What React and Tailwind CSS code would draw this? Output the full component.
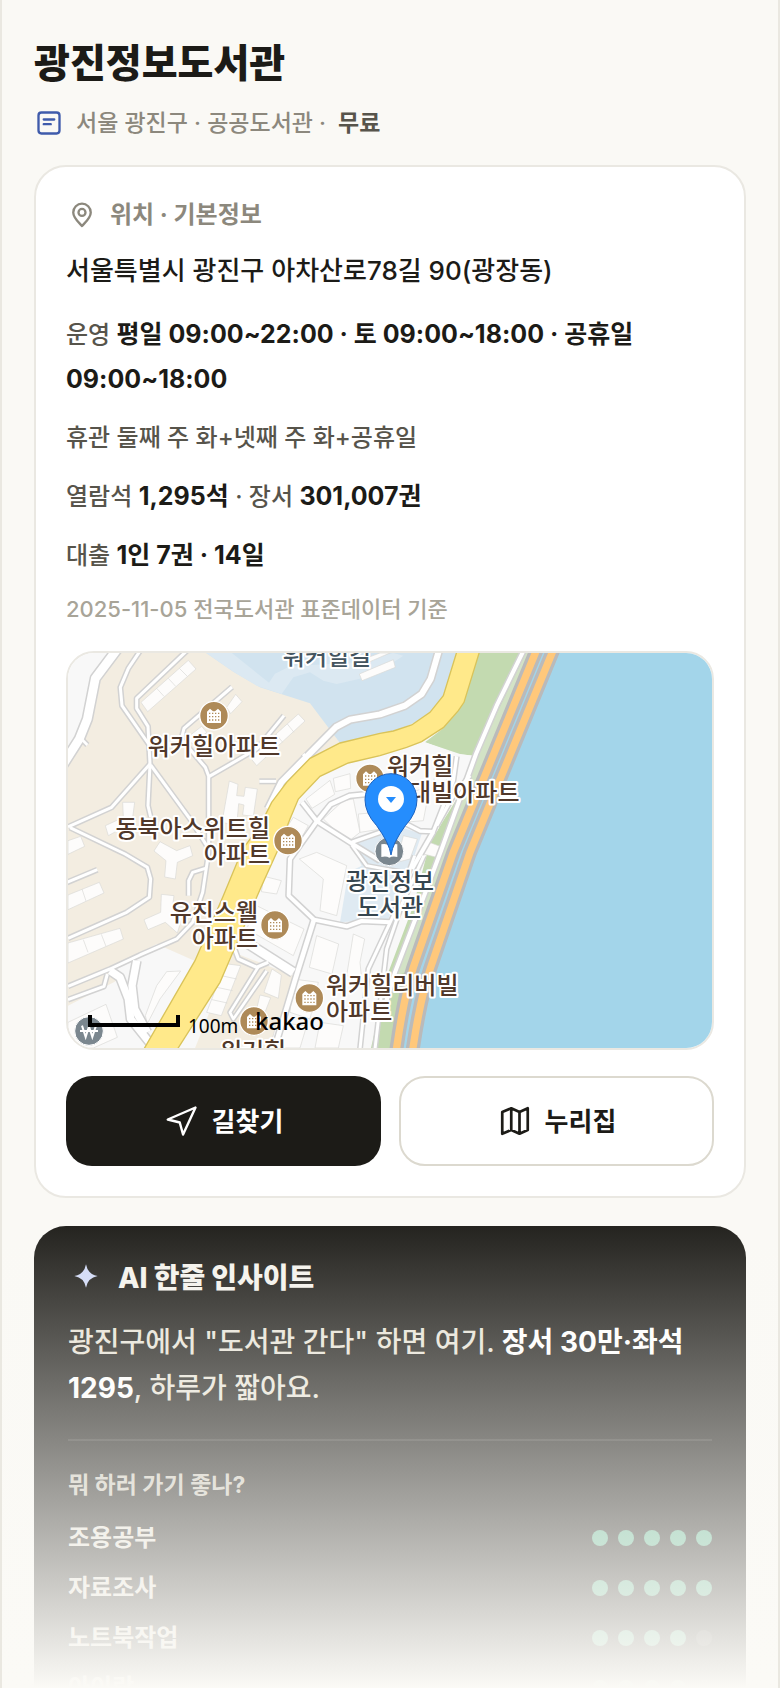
const FONT = "font-['Inter','Noto_Sans_CJK_KR',sans-serif]";

const details = [
    { key: 'hours', parts: [['운영 '], ['평일 09:00~22:00 · 토 09:00~18:00 · 공휴일 09:00~18:00', true]] },
    { key: 'closed', parts: [['휴관 둘째 주 화+넷째 주 화+공휴일']] },
    { key: 'seats', parts: [['열람석 '], ['1,295석', true], [' · 장서 '], ['301,007권', true]] },
    { key: 'loan', parts: [['대출 '], ['1인 7권 · 14일', true]] },
];

const purposes = [
    { name: '조용공부', score: 5 },
    { name: '자료조사', score: 5 },
    { name: '노트북작업', score: 4 },
    { name: '아이랑', score: 4 },
];

// Map geometry is in tile units, three to a pixel
const roads = [
    ['M172 30L106 118L82 240L58 300L4 385', 26],
    ['M60 295L82 318', 8],
    ['M240 36L205 88L181 145L186 200L268 318', 9],
    ['M382 34L230 178L230 208L264 262L270 375L264 500L272 534', 9],
    ['M270 375L155 505L24 564', 9],
    ['M272 378L390 540L440 620', 9],
    ['M516 144L372 268L364 300L436 385L446 412L446 640L428 760L398 850L350 900L240 948L150 990L24 1042', 9],
    ['M436 688L398 700L386 725L386 770', 9],
    ['M672 230L590 330L448 412', 9],
    ['M1138 30L1112 120L1085 165L1035 200L960 226L870 242L828 264L664 430L624 510', 18],
    ['M730 345L742 362', 10],
    ['M598 427H648', 9],
    ['M30 566L195 645L262 685L272 720L268 775L200 820L24 898', 9],
    ['M16 732L112 692', 9],
    ['M24 1082L132 1042L142 1005', 9],
    ['M150 995L180 1015L205 1080L212 1140L300 1250', 22],
    ['M230 965L216 1040L224 1110L262 1180', 22],
    ['M726 490L772 548L870 610L960 665', 12],
    ['M990 458L870 470L812 496L770 548L690 660L686 770L762 842L860 862L905 846L992 850', 12],
    ['M762 842L706 1020L640 1240', 14],
    ['M550 905L700 1000', 26],
    ['M520 920L535 960L590 985L625 970', 10],
    ['M594 985L510 1120L520 1140L620 995', 8],
    ['M960 560L1010 540L1080 576L1120 578L1180 425L1190 352', 10],
    ['M1120 578L1056 690', 12],
    ['M1230 410L1180 470L1130 560', 10],
    ['M875 610L960 580', 10],
    ['M875 618L920 680L1030 700', 8],
    ['M1092 650L1028 790L980 930L945 1230', 9],
    ['M1064 650L1000 830L925 990L900 1230', 9],
    ['M1390 36L1310 200L1248 345L1145 630L1070 830L1005 1000L975 1100', 12],
];

const buildings = [
    'M243 190L385 64L408 90L263 218Z',
    'M500 205L527 166L546 188L512 224Z',
    'M570 355L715 225L735 246L590 380Z',
    'M376 300L425 262L440 280L400 315Z',
    'M508 426L534 436L530 470L552 472L556 445L592 450L580 532L548 528L552 498L536 494L530 560L486 550Z',
    'M188 490H224L218 535L200 560L145 590L136 560L190 535Z',
    'M24 605L62 592L74 622L24 646Z',
    'M300 608L350 635L390 620L398 650L352 670L346 720L314 714L318 665L282 636Z',
    'M24 768L118 730L132 762L24 812Z',
    'M24 912L180 868L190 900L24 972Z',
    'M304 766L342 770L338 800L372 818L352 882L316 850L264 872L252 842L302 820Z',
    'M320 998L362 996L300 1080L262 1154L256 1130L290 1040Z',
    'M24 1150L138 1096L172 1195L100 1227L24 1227Z',
    'M496 974L542 980L484 1130L440 1120Z',
    'M738 480L810 424L824 466L756 508Z',
    'M820 418L870 404L872 448L826 458Z',
    'M790 540L850 485L880 480L900 580L862 610Z',
    'M895 525L960 520L965 570L900 580Z',
    'M645 620L700 535L745 560L700 640Z',
    'M612 712L664 725L650 765L604 758Z',
    'M718 660L770 640L860 680L830 830L780 815L790 720Z',
    'M590 800L732 870L700 950L560 870Z',
    'M770 890L836 915L816 1005L748 985Z',
    'M880 885L914 900L900 970L905 1020L860 1010Z',
    'M636 990L664 1008L655 1078L612 1060Z',
    'M600 1068L632 1076L615 1120L590 1110Z',
    'M700 1020L775 1030L750 1140L690 1120Z',
    'M650 1150L740 1160L720 1227H630Z',
    'M780 1150L850 1160L835 1227H765Z',
    'M898 105L1000 62L1006 85L906 125Z',
    'M930 68L990 42H960L925 55Z',
    'M1030 470L1110 440L1090 545L1030 550Z',
    'M1135 365L1175 380L1150 450L1120 430Z',
    'M1030 590L1072 600L1050 660L1010 670Z',
    'M1095 605L1140 622L1130 655L1090 645Z',
];

const apartments = [
    [930, 418],
    [462, 230],
    [684, 605],
    [645, 858],
    [748, 1077],
    [582, 1146],
];

const labels = [
    { lines: ['워커힐길'], x: 267, y: 26, anchor: 'middle', tone: 'fill-[#44555f]' },
    { lines: ['워커힐아파트'], x: 154, y: 116, anchor: 'middle', tone: 'fill-[#50382a]' },
    { lines: ['동북아스위트힐', '아파트'], x: 210, y: 198, anchor: 'end', tone: 'fill-[#50382a]' },
    { lines: ['유진스웰', '아파트'], x: 198, y: 282, anchor: 'end', tone: 'fill-[#50382a]' },
    { lines: ['워커힐', '현대빌아파트'], x: 327, y: 136, anchor: 'start', tone: 'fill-[#50382a]' },
    { lines: ['광진정보', '도서관'], x: 330, y: 251, anchor: 'middle', tone: 'fill-[#36464f]' },
    { lines: ['워커힐리버빌', '아파트'], x: 266, y: 355, anchor: 'start', tone: 'fill-[#50382a]' },
    { lines: ['워커힐'], x: 193, y: 421, anchor: 'middle', tone: 'fill-[#50382a]' },
];

const ApartmentMarker = ({ x, y }) => (
    <g transform={`translate(${x} ${y})`}>
        <circle r="43" fill="#ae8a58" stroke="#fff" strokeWidth="4" />
        <path d="M-21 22V-12L-12 -21L-3 -13H3L12 -21L21 -12V22Z" fill="#fff" />
        <path d="M-15 -7H17M-15 3H17M-15 13H17" stroke="#ae8a58" strokeWidth="4" strokeDasharray="4 5" />
    </g>
);

const LibraryMap = () => (
    <svg viewBox="8 14 644 395" className="block w-full h-auto" role="img" aria-label="광진정보도서관 지도">
        <rect x="8" y="14" width="644" height="395" fill="#f8f8f8" />
        <g transform="scale(0.33333)">
            {/* Land */}
            <path d="M172 30H440L640 150L760 190L850 310L760 360L640 490L560 640L405 966L290 915L150 990L180 1020L24 1100V370L60 300L82 240L106 118Z" fill="#f3ede1" />
            <path d="M520 940L700 1010L635 1240H400Z" fill="#f3ede1" />
            <path d="M430 36L520 98L600 145L750 193L840 312L1000 280L1120 225L1160 150L1200 36Z" fill="#d1e3ef" />
            <path d="M430 36H508L627 131L645 104L690 82L900 70L1000 42L1030 50L940 110L830 135L790 125L750 100L700 115L665 165L590 140L520 98Z" fill="#dce9f2" />
            <path d="M875 618L960 585L1010 560L1085 585L1060 660L1040 700L985 840L840 850L865 700L905 680Z" fill="#dfeaf2" />
            <path d="M1250 36H1440L1160 660L1050 1000L1000 1240H930L985 1000L1060 800L1110 610L1190 480L1240 350L1200 345L1095 310L1150 268Z" fill="#c3dab0" />
            <path d="M1240 350L1190 345L1095 310L1060 330V560L1130 580L1200 440Z" fill="#f8f8f8" />
            <path d="M1400 36L1250 350L1145 630L1010 1010L1060 990L1440 36Z" fill="#d3e3c6" />
            <path d="M1431 30L1178 650L1057 1000L1008 1240H1970V30Z" fill="#a3d5ea" />

            {/* Buildings */}
            {buildings.map((d) => (
                <path key={d} d={d} fill="#fdfcfb" stroke="#dad9d7" strokeWidth="2" />
            ))}
            <path d="M290 148L312 172M325 118L347 142M358 88L382 112M648 285L668 310M682 255L702 280M66 750L78 786M70 902L84 940M124 886L138 922M484 1010L530 1020M470 1045L518 1055M456 1082L502 1092" stroke="#dad9d7" strokeWidth="2" />

            {/* Streets */}
            <g fill="none" strokeLinejoin="round">
                {roads.map(([d, width]) => (
                    <path key={d} d={d} stroke="#d2d2d2" strokeWidth={width + 9} />
                ))}
                {roads.map(([d, width]) => (
                    <path key={d} d={d} stroke="#fff" strokeWidth={width} />
                ))}
            </g>
            <path
                d="M1193 30L1150 170L1110 220L1055 258L1000 276L960 283L840 312L750 358L680 430L635 490L600 560L548 630L490 770L405 965L245 1242H345L480 1030L510 960L605 740L655 630L690 540L715 480L780 412L865 372L960 350L1040 325L1085 308L1150 266L1195 215L1212 190L1261 30Z"
                fill="#ffe98a"
                stroke="#d9c35a"
                strokeWidth="4"
            />

            {/* Riverside expressway */}
            <g fill="none">
                <path d="M1431 30L1180 640L1060 985Q1030 1080 1008 1240M1481 30L1230 640L1112 985Q1080 1080 1057 1240" stroke="#bababa" strokeWidth="42" />
                <path d="M1431 30L1180 640L1060 985Q1030 1080 1008 1240M1481 30L1230 640L1112 985Q1080 1080 1057 1240" stroke="#ffc87b" strokeWidth="22" />
            </g>

            {/* Places */}
            {apartments.map(([x, y]) => (
                <ApartmentMarker key={`${x}-${y}`} x={x} y={y} />
            ))}
            <circle cx="988" cy="637" r="43" fill="#7b878f" stroke="#fff" strokeWidth="3" />
            <path d="M964 616Q978 612 988 620Q998 612 1012 616V654Q998 650 988 656Q978 650 964 654Z" fill="#fff" />
            <circle cx="87" cy="1176" r="43" fill="#7b878f" stroke="#fff" strokeWidth="3" />
            <path d="M66 1160L77 1194L87 1162L97 1194L108 1160M60 1176H114" fill="none" stroke="#fff" strokeWidth="6" />
        </g>

        {/* Place names */}
        {labels.map(({ lines, x, y, anchor, tone }) => (
            <text
                key={`${lines[0]}-${x}`}
                textAnchor={anchor}
                className={`font-['Noto_Sans_CJK_KR',sans-serif] text-[24px] font-medium stroke-white stroke-[4px] [paint-order:stroke] [stroke-linejoin:round] ${tone}`}
            >
                {lines.map((line, i) => (
                    <tspan key={line} x={x} y={y + i * 26}>{line}</tspan>
                ))}
            </text>
        ))}

        {/* Pin */}
        <g transform="scale(0.33333)">
            <path d="M993 648Q988 612 950 560Q915 522 915 482A78 78 0 0 1 1071 482Q1071 522 1036 560Q998 612 993 648Z" fill="#258dfd" stroke="#1c62c0" strokeWidth="3" />
            <circle cx="993" cy="480" r="39" fill="#fff" />
            <path d="M978 474H1008L993 492Z" fill="#258dfd" />
        </g>

        {/* Scale and provider */}
        <path d="M30 376V386H118V376" fill="none" stroke="#000" strokeWidth="4" />
        <text x="128" y="394" className="font-['Noto_Sans',sans-serif] text-[19px] fill-black">100m</text>
        <text x="195" y="391" className="font-['Noto_Sans',sans-serif] text-[24px] font-medium fill-black">kakao</text>
    </svg>
);

const ScoreDots = ({ score }) => (
    <span className="flex gap-[10px]" role="img" aria-label={`5점 중 ${score}점`}>
        {[1, 2, 3, 4, 5].map((n) => (
            <span key={n} className={`size-4 rounded-full ${n <= score ? 'bg-[#57b08b]' : 'bg-white/15'}`} />
        ))}
    </span>
);

const InfoCard = () => (
    <section className="mt-6 rounded-[32px] border-2 border-[#eae8e2] bg-white p-[30px]">
        <h2 className="flex items-center gap-3 text-[24px] leading-9 font-bold text-[#8c887d]">
            <svg viewBox="0 0 24 24" className="mx-[2px] size-7" fill="none" stroke="currentColor" strokeWidth="2" strokeLinejoin="round">
                <path d="M12 21.5C9.5 18.5 4.500 14.500 4.500 9.800a7.500 7.500 0 0 1 15 0c0 4.700-5 8.700-7.500 11.700Z" />
                <circle cx="12" cy="9.800" r="3" />
            </svg>
            위치 · 기본정보
        </h2>
        <p className="mt-[18px] text-[26px] leading-10 font-medium text-[#1c1b17]">서울특별시 광진구 아차산로78길 90(광장동)</p>
        <div className="mt-[21px] flex flex-col gap-[14px] text-[24px] leading-[44px] font-medium text-[#57544b]">
            {details.map(({ key, parts }) => (
                <p key={key}>
                    {parts.map(([text, strong]) =>
                        strong ? <b key={text} className="text-[25px] font-bold text-[#1c1b17]">{text}</b> : text
                    )}
                </p>
            ))}
        </div>
        <p className="mt-[13px] text-[22px] leading-9 font-medium text-[#a8a498]">2025-11-05 전국도서관 표준데이터 기준</p>
        <div className="mt-6 overflow-hidden rounded-[28px] border-2 border-[#eae8e2]">
            <LibraryMap />
        </div>
        <div className="mt-[26px] grid grid-cols-2 gap-[18px]">
            <a href="#directions" className="flex h-[90px] items-center justify-center gap-3 rounded-[26px] bg-[#1c1b17] text-[26px] font-bold text-white">
                <svg viewBox="0 0 24 24" className="size-9" fill="none" stroke="currentColor" strokeWidth="1.600" strokeLinejoin="round">
                    <path d="M21 3L2.500 11L10.500 13L12.700 21Z" />
                </svg>
                길찾기
            </a>
            <a href="#homepage" className="flex h-[90px] items-center justify-center gap-3 rounded-[26px] border-2 border-[#dcd9cf] bg-white text-[26px] font-bold text-[#1c1b17]">
                <svg viewBox="0 0 24 24" className="size-9" fill="none" stroke="currentColor" strokeWidth="1.800" strokeLinejoin="round">
                    <path d="M3.500 6L9.500 3.500L15 6L20.500 3.500V18L15 20.500L9.500 18L3.500 20.500ZM9.500 3.500V18M15 6V20.500" />
                </svg>
                누리집
            </a>
        </div>
    </section>
);

const InsightCard = () => (
    <section className="mt-7 rounded-[32px] bg-[#1c1b17] px-[34px] pt-[31px] pb-12">
        <h2 className="flex items-center gap-[14px] text-[28px] leading-[42px] font-extrabold text-[#f4f2ec]">
            <svg viewBox="0 0 24 24" className="mx-1 mb-1 size-7" fill="#cfd8f6">
                <path d="M12 2Q13.500 10.500 22 12Q13.500 13.500 12 22Q10.500 13.500 2 12Q10.500 10.500 12 2Z" />
            </svg>
            AI 한줄 인사이트
        </h2>
        <p className="mt-5 text-[28px] leading-[46px] font-medium text-[#e6e2d6]">
            광진구에서 "도서관 간다" 하면 여기. <b className="font-bold text-white">장서 30만·좌석 1295</b>, 하루가 짧아요.
        </p>
        <div className="mt-7 border-t-2 border-white/10 pt-7">
            <h3 className="text-[23px] leading-8 font-bold text-[#c8c4b8]">뭐 하러 가기 좋나?</h3>
            <ul className="mt-3">
                {purposes.map(({ name, score }) => (
                    <li key={name} className="flex h-[50px] items-center justify-between text-[24px] font-semibold text-[#e2dfd5]">
                        {name}
                        <ScoreDots score={score} />
                    </li>
                ))}
            </ul>
        </div>
    </section>
);

const App = () => {
    return (
        <div className={`${FONT} relative h-screen overflow-hidden border-x-2 border-[#eae8e1] bg-[#faf9f5] px-8 pt-9`}>
            <h1 className="text-[39px] leading-[54px] font-extrabold text-[#1c1b17]">광진정보도서관</h1>
            <p className="mt-[15px] flex items-center text-[23px] leading-9 font-medium text-[#8c887d]">
                <svg viewBox="0 0 24 24" className="mr-[13px] ml-[1px] size-7" fill="none" stroke="#3f5bab" strokeWidth="2" strokeLinecap="round">
                    <rect x="3" y="3" width="18" height="18" rx="2.500" />
                    <path d="M7.500 9H16.500M7.500 13H13.500" />
                </svg>
                서울 광진구 · 공공도서관 · <b className="ml-3 font-bold text-[#57544b]">무료</b>
            </p>
            <InfoCard />
            <InsightCard />
            {/* Fade towards the bottom of the preview */}
            <div className="pointer-events-none absolute inset-x-0 bottom-0 h-[480px] bg-gradient-to-b from-[#fbfaf6]/0 to-[#fbfaf6]" />
        </div>
    );
};

export default App;
